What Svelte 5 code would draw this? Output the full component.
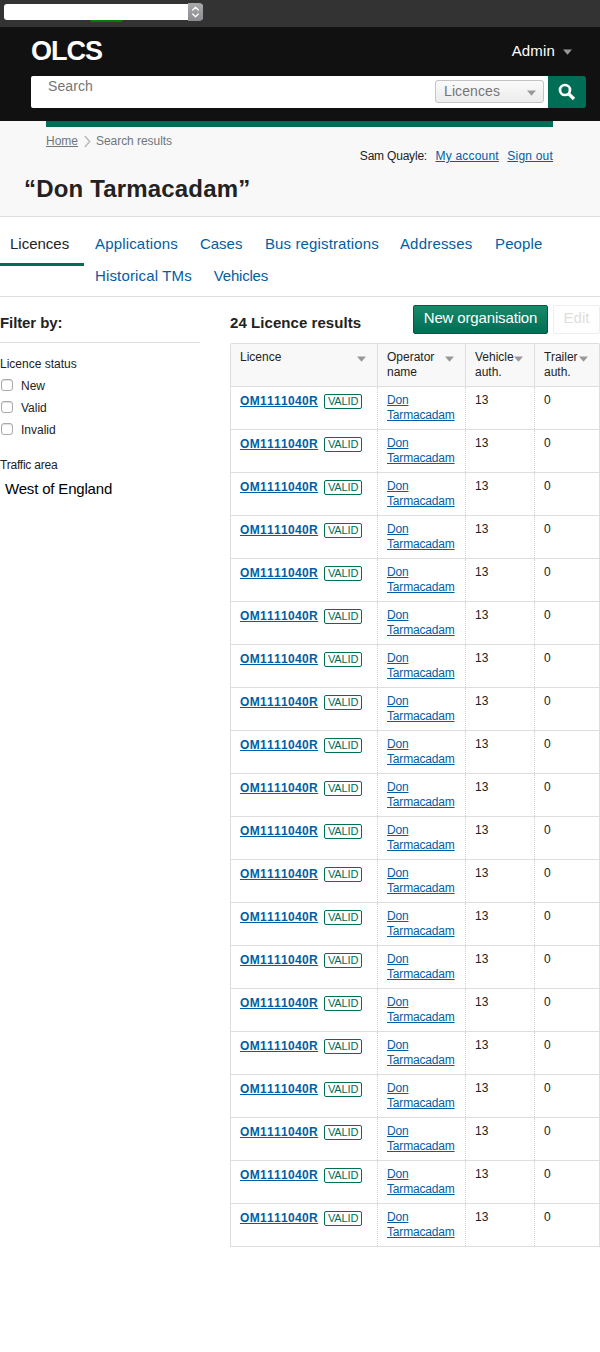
<script>
  const tabs = [
    { name: 'Applications', left: 11, ls: 0.17 },
    { name: 'Cases', left: 22, ls: 0 },
    { name: 'Bus registrations', left: 22.5, ls: 0.13 },
    { name: 'Addresses', left: 21, ls: 0.2 },
    { name: 'People', left: 22.5, ls: 0.1 },
    { name: 'Historical TMs', left: 11, ls: 0.15 },
    { name: 'Vehicles', left: 22, ls: -0.22 }
  ];
  const firstLine = tabs.slice(0, 5);
  const secondLine = tabs.slice(5);
  const statuses = ['New', 'Valid', 'Invalid'];
  const columns = ['Licence', 'Operator name', 'Vehicle auth.', 'Trailer auth.'];
  const rows = Array.from({ length: 20 }, () => ({
    licence: 'OM1111040R',
    status: 'VALID',
    operator: 'Don Tarmacadam',
    vehicles: 13,
    trailers: 0
  }));
</script>

{#snippet arrow()}
  <svg class="arrow" width="9" height="6" viewBox="0 0 9 6"><path d="M0 .5h9L4.5 5.7z" fill="#999" /></svg>
{/snippet}

<div class="devbar">
  <div class="picker">
    <span class="step">
      <svg width="9" height="12" viewBox="0 0 9 12" fill="none" stroke="#fff" stroke-width="1.3" stroke-linecap="round" stroke-linejoin="round"><path d="M1.7 4 4.5 1.3 7.3 4M1.7 8l2.8 2.7L7.3 8" /></svg>
    </span>
  </div>
  <div class="flag"></div>
</div>

<header>
  <div class="brand">
    <strong>OLCS</strong>
    <a class="admin" href="#admin">Admin {@render arrow()}</a>
  </div>
  <div class="search">
    <div class="field">
      <span class="placeholder">Search</span>
      <div class="scope"><span>Licences</span>{@render arrow()}</div>
    </div>
    <button class="go" aria-label="Search">
      <svg width="18" height="18" viewBox="0 0 18 18" fill="none" stroke="#fff"><circle cx="7" cy="7" r="5" stroke-width="2.7" /><path d="m10.8 10.8 5.2 5.2" stroke-width="3.3" /></svg>
    </button>
  </div>
</header>

<section class="banner">
  <div class="stripe"></div>
  <div class="meta">
    <nav class="crumbs">
      <a href="#home">Home</a>
      <svg width="7" height="13" viewBox="0 0 7 13" fill="none" stroke="#b3b6b8" stroke-width="1.3"><path d="m.8 1 5 5.5-5 5.5" /></svg>
      <span>Search results</span>
    </nav>
    <div class="user"><span>Sam Quayle:</span><a href="#account">My account</a><a href="#out">Sign out</a></div>
  </div>
  <h1>“Don Tarmacadam”</h1>
</section>

<nav class="tabs">
  <span class="current">Licences</span>
  <div>
    {#each [firstLine, secondLine] as line}
      <div class="line">
        {#each line as tab}
          <a href="#tab" style="margin-left: {tab.left}px; letter-spacing: {tab.ls}px">{tab.name}</a>
        {/each}
      </div>
    {/each}
  </div>
</nav>

<main>
  <aside>
    <h2>Filter by:</h2>
    <p class="label">Licence status</p>
    {#each statuses as status}
      <label><input type="checkbox" />{status}</label>
    {/each}
    <p class="label area">Traffic area</p>
    <div class="value">West of England</div>
  </aside>
  <div class="results">
    <div class="toolbar">
      <h2>24 Licence results</h2>
      <button class="primary">New organisation</button>
      <button class="edit" disabled>Edit</button>
    </div>
    <div class="table">
      <div class="row head">
        {#each columns as column}
          <div class="cell"><span>{column}</span>{@render arrow()}</div>
        {/each}
      </div>
      {#each rows as row}
        <div class="row">
          <div class="cell licence"><a href="#licence">{row.licence}</a><span class="badge">{row.status}</span></div>
          <div class="cell operator"><a href="#operator">{row.operator}</a></div>
          <div class="cell">{row.vehicles}</div>
          <div class="cell">{row.trailers}</div>
        </div>
      {/each}
    </div>
  </div>
</main>

<style>
  :global(body) {
    background: #fff;
    height: 1352px;
    color: #222;
    font: 12px/15px 'Liberation Sans', Arial, sans-serif;
  }
  :global(#app *) { box-sizing: border-box; }
  h1, h2, p { margin: 0; }
  a { color: #005ea5; }
  button { font-family: inherit; padding: 0; margin: 0; }
  svg { display: block; flex: none; }

  .devbar { height: 27px; background: #333; padding: 4px 0 0 4px; }
  .picker { display: flex; align-items: center; justify-content: flex-end; width: 199px; height: 16px; background: #fff; border-radius: 3px; }
  .step { width: 15px; height: 18px; flex: none; display: grid; place-items: center; border-radius: 0 4px 4px 0; background: linear-gradient(#a9a9ae, #8b8b90); }
  .flag { width: 33px; height: 2px; margin-left: 86px; background: #008000; border-radius: 0 0 2px 2px; }

  header { height: 94px; background: #111; padding-left: 31px; }
  .brand { height: 49px; display: flex; justify-content: space-between; padding-right: 28px; color: #fff; }
  .brand strong { font-size: 27px; line-height: 48px; letter-spacing: -1px; }
  .admin { display: flex; align-items: center; gap: 8px; height: 46px; color: #fff; text-decoration: none; font-size: 15px; letter-spacing: .15px; }
  .admin :global(svg) { margin-top: 4px; }
  .search { display: flex; width: 555px; height: 32px; }
  .field { width: 517px; display: flex; justify-content: space-between; background: #fff; padding: 4px 4px 0 17px; border-radius: 2px 0 0 2px; color: #757575; font-size: 14px; }
  .placeholder { line-height: 12px; letter-spacing: .1px; }
  .scope { width: 109px; height: 23px; border: 1px solid #c4c4c4; border-radius: 3px; background: linear-gradient(#fafafa, #ececec); display: flex; align-items: center; justify-content: space-between; padding: 0 7px 0 8px; letter-spacing: .1px; }
  .scope :global(svg) { margin-top: 2px; }
  .go { width: 38px; border: 0; background: #006d55; border-radius: 0 3px 3px 0; display: grid; place-items: center; }

  .banner { height: 96px; background: #f8f8f8; border-bottom: 1px solid #dedede; }
  .stripe { height: 6px; margin: 0 47px 0 46px; background: #006d55; }
  .meta { height: 44px; display: flex; justify-content: space-between; margin: 0 47px 0 46px; }
  .crumbs { display: flex; gap: 5.5px; padding-top: 7px; height: 22px; color: #6f777b; }
  .crumbs a { color: inherit; }
  .crumbs span { letter-spacing: -.05px; }
  .crumbs svg { margin-top: 1px; }
  .user { display: flex; gap: 8.5px; padding-top: 22px; }
  .user span { letter-spacing: -.2px; }
  .user a { letter-spacing: .2px; }
  h1 { padding-left: 24px; font-size: 24px; line-height: 36px; letter-spacing: .17px; }

  .tabs { height: 80px; display: flex; border-bottom: 1px solid #dedede; font-size: 15px; line-height: 32px; padding-top: 11px; }
  .current { width: 84px; height: 38px; padding-left: 10px; border-bottom: 3px solid #006d55; }
  .line { display: flex; white-space: nowrap; }
  .tabs a { text-decoration: none; }

  main { display: flex; }
  aside { width: 200px; }
  h2 { font-size: 15px; font-weight: bold; }
  aside h2 { height: 46px; line-height: 18px; padding-top: 17px; border-bottom: 1px solid #dedede; letter-spacing: -.1px; }
  .label { padding-top: 14px; height: 32px; }
  label { display: flex; align-items: center; height: 22px; }
  input { appearance: none; width: 12px; height: 12px; border: 1px solid #aaa; border-radius: 3px; background: #fff; margin: -2px 8px 0 1px; box-shadow: inset 0 1px 1px #ddd; }
  .label.area { padding-top: 17px; height: 34px; letter-spacing: -.22px; }
  .value { padding: 4px 0 0 5px; font-size: 15px; line-height: 20px; color: #000; letter-spacing: -.18px; }

  .results { width: 370px; margin-left: 30px; }
  .toolbar { display: flex; height: 46px; padding-top: 8px; }
  .toolbar h2 { width: 183px; line-height: 18px; padding-top: 9px; letter-spacing: .06px; }
  .toolbar button { height: 29px; font-size: 15px; border-radius: 2px; padding-bottom: 4px; }
  .primary { width: 135px; color: #fff; border: 1px solid #005b45; background: linear-gradient(#188b69, #006d55); letter-spacing: -.15px; }
  .edit { width: 47px; margin-left: 5px; color: #dedede; background: #fff; border: 1px solid #eee; }
  .table { border: 1px solid #dedede; border-bottom: 0; border-radius: 2px 2px 0 0; }
  .row { display: grid; grid-template-columns: 147px 88px 69px 64px; height: 43px; border-bottom: 1px solid #dedede; }
  .head { height: 43px; background: #f8f8f8; }
  .cell { padding: 6px 9px; border-right: 1px dotted #d4d4d4; }
  .cell:last-child { border-right: 0; }
  .operator { letter-spacing: -.18px; }
  .head .cell { display: flex; justify-content: space-between; border-right-style: solid; border-right-color: #dedede; padding-right: 11px; }
  .licence { display: flex; padding-top: 7px; }
  .licence a { font-weight: bold; font-kerning: none; letter-spacing: .34px; }
  .badge { width: 38px; height: 15px; margin-left: 6px; border: 1px solid #006d55; border-radius: 2px; color: #006d55; font-size: 11px; line-height: 13px; text-align: center; letter-spacing: -.1px; }
  .head :global(svg) { margin-top: 6px; margin-left: -2px; }
</style>
